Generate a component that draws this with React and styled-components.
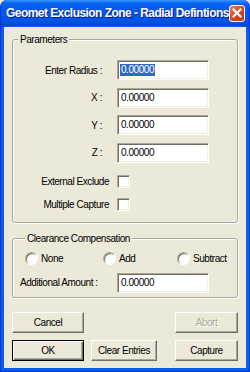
import React, { useState } from 'react';
import styled, { createGlobalStyle } from 'styled-components';

const GlobalStyle = createGlobalStyle`
  html, body {
    margin: 0;
    padding: 0;
    background: #ECE9D8;
  }
  body {
    font-family: "Liberation Sans", Arial, sans-serif;
    font-size: 10px;
    letter-spacing: -0.45px;
    color: #000;
  }
`;

const Window = styled.div`
  width: 250px;
  height: 372px;
  box-sizing: border-box;
  display: flex;
  flex-direction: column;
  background: #0A5DE8;
  border: 1px solid #0831D9;
  border-top: none;
  border-radius: 7px 7px 0 0;
  overflow: hidden;
`;

const TitleBar = styled.div`
  height: 26px;
  flex: none;
  display: flex;
  align-items: center;
  justify-content: space-between;
  padding: 0 4px 0 5px;
  background: linear-gradient(#3D95FF 0%, #0A66F5 12%, #0058EE 40%, #0055E5 80%, #0046C8 100%);
`;

const Title = styled.div`
  color: #fff;
  font-weight: bold;
  font-size: 12px;
  letter-spacing: -0.55px;
  text-shadow: 1px 1px #0A1883;
  white-space: nowrap;
`;

const CloseButton = styled.div`
  width: 17px;
  height: 17px;
  box-sizing: border-box;
  border: 1px solid #fff;
  border-radius: 3px;
  background: linear-gradient(135deg, #E8876A 0%, #D9431E 50%, #C5361A 100%);
  display: flex;
  align-items: center;
  justify-content: center;
`;

const Client = styled.div`
  flex: 1;
  margin: 1px 3px 3px 3px;
  background: #ECE9D8;
  display: flex;
  flex-direction: column;
  padding: 7px 8px 7px 8px;
`;

const Group = styled.fieldset`
  margin: 0;
  padding: ${p => p.$pad};
  border: 1px solid #ACA899;
  border-radius: 3px;
  box-shadow: inset 1px 1px #fff, 1px 1px #fff;
  min-width: 0;
  margin-bottom: ${p => p.$gap || 0}px;
`;

const Legend = styled.legend`
  padding: 0 2px;
  margin-left: 5px;
  line-height: 11px;
  background: #ECE9D8;
`;

const Fields = styled.div`
  display: flex;
  flex-direction: column;
  gap: 7.67px;
`;

const FieldRow = styled.div`
  display: flex;
  align-items: center;
  height: 20px;
`;

const Label = styled.div`
  width: ${p => p.$w}px;
  text-align: ${p => p.$align || 'right'};
  padding-right: ${p => p.$pr || 0}px;
  box-sizing: border-box;
  white-space: nowrap;
  flex: none;
`;

const TextBox = styled.div`
  width: 92px;
  height: 20px;
  box-sizing: border-box;
  background: #fff;
  border-top: 1px solid #ACA899;
  border-left: 1px solid #ACA899;
  border-bottom: 1px solid #fff;
  border-right: 1px solid #fff;
  box-shadow: inset 1px 1px #716F64, inset -1px -1px #F1EFE2;
  padding: 2px 2px;
  display: flex;
  align-items: center;
`;

const Selected = styled.span`
  background: ${p => (p.$on ? '#316AC5' : 'transparent')};
  color: ${p => (p.$on ? '#fff' : '#000')};
  padding: 0 1px;
  line-height: 12px;
`;

const CheckRow = styled.div`
  display: flex;
  align-items: center;
  height: 13px;
  margin-top: ${p => p.$mt || 0}px;
`;

const CheckBox = styled.div`
  width: 13px;
  height: 13px;
  box-sizing: border-box;
  background: #fff;
  border-top: 1px solid #ACA899;
  border-left: 1px solid #ACA899;
  border-bottom: 1px solid #fff;
  border-right: 1px solid #fff;
  box-shadow: inset 1px 1px #716F64, inset -1px -1px #F1EFE2;
`;

const RadioRow = styled.div`
  display: flex;
  align-items: center;
  height: 13px;
  padding-left: 5px;
  margin-bottom: 8px;
`;

const Radio = styled.label`
  display: flex;
  align-items: center;
  gap: 3px;
  width: ${p => (p.$w ? `${p.$w}px` : 'auto')};
  flex: none;
`;

const RadioDot = styled.span`
  width: 13px;
  height: 13px;
  box-sizing: border-box;
  border-radius: 50%;
  background: radial-gradient(circle at 60% 60%, #fff 0%, #fff 45%, #F1EFE2 100%);
  border: 1px solid;
  border-color: #ACA899 #fff #fff #ACA899;
  box-shadow: inset 1px 1px #716F64;
`;

const Buttons = styled.div`
  display: grid;
  grid-template-columns: 72px 1fr 63px;
  row-gap: 7px;
  margin-top: 14px;
`;

const Button = styled.div`
  height: 21px;
  box-sizing: border-box;
  width: ${p => (p.$w ? `${p.$w}px` : 'auto')};
  margin-left: ${p => p.$ml || 0}px;
  display: flex;
  align-items: center;
  justify-content: center;
  background: #ECE9D8;
  border: 1px solid;
  border-color: ${p => (p.$default ? '#000' : '#fff #716F64 #716F64 #fff')};
  box-shadow: ${p =>
    p.$default
      ? 'inset 1px 1px #fff, inset -1px -1px #716F64, inset -2px -2px #ACA899'
      : 'inset -1px -1px #ACA899'};
  color: ${p => (p.$disabled ? '#ACA899' : '#000')};
  text-shadow: ${p => (p.$disabled ? '1px 1px #fff' : 'none')};
  white-space: nowrap;
`;

const fields = [
  { label: 'Enter Radius :', value: '0.00000', selected: true },
  { label: 'X :', value: '0.00000' },
  { label: 'Y :', value: '0.00000' },
  { label: 'Z :', value: '0.00000' },
];

function App() {
  const [mode] = useState(null);
  return (
    <>
      <GlobalStyle />
      <Window>
        <TitleBar>
          <Title>Geomet Exclusion Zone - Radial Defintions</Title>
          <CloseButton>
            <svg width="10" height="10" viewBox="0 0 10 10">
              <path d="M1.5 1.5 L8.5 8.5 M8.5 1.5 L1.5 8.5" stroke="#fff" strokeWidth="2.2" strokeLinecap="square" />
            </svg>
          </CloseButton>
        </TitleBar>
        <Client>
          <Group $pad="15px 0 11px 0" $gap={10}>
            <Legend>Parameters</Legend>
            <Fields>
              {fields.map(f => (
                <FieldRow key={f.label}>
                  <Label $w={104} $pr={15}>{f.label}</Label>
                  <TextBox>
                    <Selected $on={f.selected}>{f.value}</Selected>
                  </TextBox>
                </FieldRow>
              ))}
            </Fields>
            <CheckRow $mt={12}>
              <Label $w={104} $pr={8}>External Exclude</Label>
              <CheckBox />
            </CheckRow>
            <CheckRow $mt={10}>
              <Label $w={104} $pr={8}>Multiple Capture</Label>
              <CheckBox />
            </CheckRow>
          </Group>
          <Group $pad="8px 0 4px 7px">
            <Legend>Clearance Compensation</Legend>
            <RadioRow>
              <Radio $w={78}><RadioDot />None</Radio>
              <Radio $w={74}><RadioDot />Add</Radio>
              <Radio><RadioDot />Subtract</Radio>
            </RadioRow>
            <FieldRow>
              <Label $w={97} $align="left">Additional Amount :</Label>
              <TextBox>
                <Selected $on={mode}>0.00000</Selected>
              </TextBox>
            </FieldRow>
          </Group>
          <Buttons>
            <Button>Cancel</Button>
            <span />
            <Button $disabled>Abort</Button>
            <Button $default>OK</Button>
            <Button $w={66} $ml={7}>Clear Entries</Button>
            <Button>Capture</Button>
          </Buttons>
        </Client>
      </Window>
    </>
  );
}

export default App;
